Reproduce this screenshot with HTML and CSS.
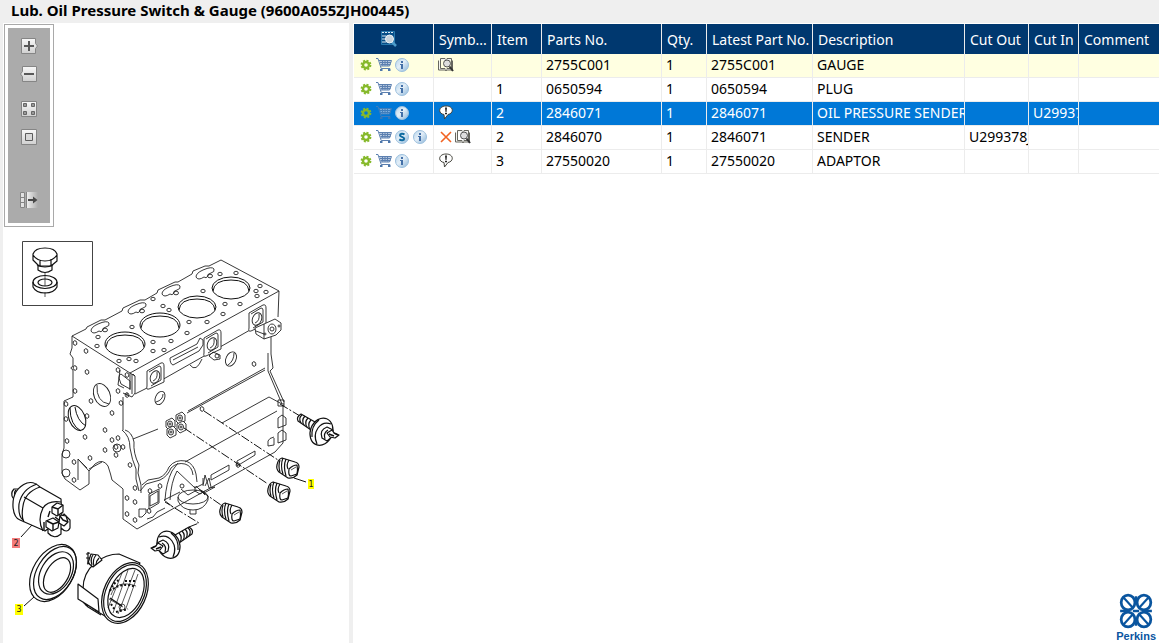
FILE: index.html
```html
<!DOCTYPE html>
<html lang="en">
<head>
  <meta charset="UTF-8">
  <meta name="viewport" content="width=device-width, initial-scale=1.0">
  <title>Lub. Oil Pressure Switch &amp; Gauge</title>
  <link rel="stylesheet" href="styles.css">
</head>
<body>
  <!-- shared icons -->
  <svg class="sprite" aria-hidden="true">
    <defs>
      <linearGradient id="metal" x1="0" y1="0" x2="0" y2="1">
        <stop offset="0" stop-color="#f8f8f8"/>
        <stop offset="1" stop-color="#d0d0d0"/>
      </linearGradient>
      <linearGradient id="fade" x1="0" y1="0" x2="1" y2="0">
        <stop offset="0" stop-color="#f4f4f4"/>
        <stop offset="1" stop-color="#ababab"/>
      </linearGradient>
      <linearGradient id="disc" x1="0" y1="0" x2="1" y2="1">
        <stop offset="0" stop-color="#b5d3ea"/>
        <stop offset="0.45" stop-color="#e4eff8"/>
        <stop offset="1" stop-color="#8ab4d8"/>
      </linearGradient>
    </defs>
    <symbol id="gear" viewBox="0 0 16 16">
      <circle cx="8" cy="8" r="4.5" fill="none" stroke="#86b92b" stroke-width="1.8" stroke-dasharray="2 1.53"/>
      <circle cx="8" cy="8" r="3" fill="none" stroke="#86b92b" stroke-width="2.4"/>
    </symbol>
    <symbol id="cart" viewBox="0 0 16 16">
      <path d="M3.5 3.5H15L13 9H5z" fill="#b6c7df"/>
      <path d="M0 1.5h2l3.2 10h9M3 3.5h12.5L13.5 9H5M4 5.5h11M4.5 7.5h10M6.5 3.5v5M9 3.5v5M11.5 3.5v5" fill="none" stroke="#5c80b0"/>
      <path d="M4 12h2.5v2H4zM12 12h2.5v2H12z" fill="#4d77ab"/>
    </symbol>
    <symbol id="info" viewBox="0 0 16 16">
      <circle cx="8" cy="8" r="6.5" fill="url(#disc)" stroke="#9cc0de"/>
      <path d="M7 4h2v2H7zM6 7h3v5H7V8H6z" fill="#4470a8"/>
    </symbol>
    <symbol id="super" viewBox="0 0 16 16">
      <circle cx="8" cy="8" r="6.5" fill="url(#disc)" stroke="#9cc0de"/>
      <path d="M10.5 5.500C9 4.300 6 4.500 6 6.200C6 8 10.200 7.700 10.200 9.800C10.200 11.500 7 11.700 5.300 10.400" fill="none" stroke="#0d6aa0" stroke-width="2"/>
    </symbol>
    <symbol id="book" viewBox="0 0 16 16">
      <path d="M.5 3.500V13H7l1 .8L9 13h5.500V3.500M2.500 11.500V1.500H7l1 1 1-1h4.500v10H9l-1 1-1-1z" fill="#f3f3f0" stroke="#66665f"/>
      <circle cx="9" cy="6.500" r="3.500" fill="#dedede" stroke="#555"/>
      <path d="M11.500 9.500 15 14" stroke="#333" stroke-width="2"/>
    </symbol>
    <symbol id="note" viewBox="0 0 16 16">
      <path d="M6 9.500C-.5 8.500.5 1 8 1c8 0 8 7.500 2 8.500L6.500 14z" fill="#fff" stroke="#44443c"/>
      <path d="M7 2.500h2L8.500 7h-1zM7 7.700h2v1.500H7z" fill="#222"/>
    </symbol>
    <symbol id="cross" viewBox="0 0 16 16">
      <path d="m3 3 10 10M13 3 3 13" fill="none" stroke="#f26322" stroke-width="1.6"/>
    </symbol>
  </svg>

  <header class="title-bar">
    <h1>Lub. Oil Pressure Switch &amp; Gauge (9600A055ZJH00445)</h1>
  </header>

  <main class="split">
    <section class="drawing-pane">
      <div class="toolbar">
        <button type="button" aria-label="Zoom in">
          <svg viewBox="0 0 18 16"><path d="M1.5.5h14v5l2 2.500-2 2.500v5h-14z" fill="url(#metal)" stroke="#858585"/><path d="M4 8h10M9 3v10" stroke="#585858" stroke-width="2"/></svg>
        </button>
        <button type="button" aria-label="Zoom out">
          <svg viewBox="0 0 18 16"><path d="M16.5.5h-14v5l-2 2.500 2 2.500v5h14z" fill="url(#metal)" stroke="#858585"/><path d="M4 8h10" stroke="#585858" stroke-width="2"/></svg>
        </button>
        <button type="button" class="group" aria-label="Fit all">
          <svg viewBox="0 0 18 16"><path d="M1.500.5h15v15h-15z" fill="url(#metal)" stroke="#858585"/><path d="M3.500 2.500h3v3h-3zM11.500 2.500h3v3h-3zM3.500 10.500h3v3h-3zM11.500 10.500h3v3h-3z" fill="#999" stroke="#666"/></svg>
        </button>
        <button type="button" aria-label="Actual size">
          <svg viewBox="0 0 18 16"><path d="M1.500.5h15v15h-15z" fill="url(#metal)" stroke="#858585"/><path d="M5.500 4.500h7v7h-7z" fill="#d8d8d8" stroke="#5c5c5c"/></svg>
        </button>
        <button type="button" class="detach" aria-label="Move panel">
          <svg viewBox="0 0 18 16"><path d="M6 0h12v16H6z" fill="url(#fade)"/><path d="M.5.5h4v15h-4zM.5 5.500h4M.5 10.500h4M6.500 0v16" fill="#e2e2e2" stroke="#858585"/><path d="M8 8h7" stroke="#484848" stroke-width="2"/><path d="m13 4.500 4.500 3.500-4.500 3.500z" fill="#484848"/></svg>
        </button>
      </div>

      <svg class="drawing" viewBox="3 227 346 416" role="img" aria-label="Cylinder block with oil pressure senders, plugs and gauge">
        <defs>
          <ellipse id="hole" rx="2.2" ry="1.7"/>
          <ellipse id="port" rx="1.8" ry="2.3" transform="rotate(-15)"/>
          <g id="plug">
            <path d="M-11-3Q-10-9-6-10L7-6Q11-5 11-1L9 7Q5 11 0 10L-9 4Q-12 1-11-3z" fill="#fff"/>
            <path d="M-8-8Q-10-2-8 4M-5-10Q-8-3-5 6M-2-9Q-5-2-2 8M1-8Q-2-3 0 1" />
            <path d="M1 1Q5-3 9-3 10 2 9 6L3 8Q0 8 1 1z"/>
            <path d="M3 2 8-1" stroke-width="0.7"/>
          </g>
          <g id="sender">
            <path d="M-24-12Q-26-16-21-19L-7-11-11-3z" fill="#fff"/>
            <path d="M-20-18Q-24-15-21-10M-17-17Q-21-13-18-8M-14-15Q-18-11-15-6M-11-13Q-15-9-12-4"/>
            <ellipse cx="-1" cy="-1" rx="11" ry="14" transform="rotate(22)" fill="#fff"/>
            <path d="M-10 4Q-11-7-3-13M-5 11Q-9 2-4-5 1-12 9-9"/>
            <path d="M0 5Q-3-3 5-6l6 3v6L5 8z" fill="#fff"/>
            <path d="M3 6Q1 0 6-3M5 0l5-3 2 3 5 2-4 3-5-1z" fill="#fff"/>
            <path d="M7 1l5 2M12 0l4 2" class="heavy"/>
          </g>
          <g id="pad">
            <path d="M-8-6 6-14Q9-15 9-11V5L-6 12Q-9 13-8 9zM-6-5 4-11Q6-11 6-9V3L-4 9" fill="#fff"/>
            <ellipse rx="4.5" ry="6.5" transform="rotate(22)"/>
            <path d="M-2 4Q3 2 2-5"/>
          </g>
          <g id="kidney">
            <path d="M-9 3Q-9-1-2-4 7-8 9-5 10-2 6-1 2 0 3 2 1 5-1 3-7 7-9 3z"/>
            <ellipse cx="5" cy="2" rx="2.5" ry="1.8"/>
          </g>
          <g id="boss">
            <path d="M-4-3 2-6 5-3V3L-1 6-4 3z" fill="#fff"/>
            <ellipse rx="2.5" ry="3"/>
            <circle r="1"/>
          </g>
        </defs>

        <!-- plug and washer inset -->
        <path class="frame" d="M22.500 241.500h70v64h-70z"/>
        <g class="part">
          <path d="M33 254Q35 248 45 248T57 254V261L51 266H39L33 260zM33 255Q37 261 45 261T57 255M40 260V266M51 259V266"/>
          <path d="M38 266V270Q45 275 52 270V266M37 265Q45 269 53 265"/>
          <ellipse cx="45" cy="282" rx="12" ry="6.5"/>
          <ellipse cx="45" cy="282.5" rx="7" ry="3.5"/>
          <path d="M33 282V287Q36 293 45 293T57 287V282"/>
        </g>
        <path class="fine" d="M45 273V286M45 292V297"/>

        <!-- cylinder block -->
        <g class="block">
          <path d="M72 336 86 329 87 327 101 320 105 320 122 311 123 308 140 300 145 300 157 293 158 290 175 282 178 282 192 274 193 271 205 266 209 266 221 260 279 291 130 373z"/>
          <path d="M72 336V348L70 354 73 358V366Q69 368 73 370V397L64 401V448L62 455V473L65 479 80 490 89 484V471L78 459V480M78 459 87 468"/>
          <path d="M130 373 135 376V393L132 397 123 393M135 376 133 374M127 396V393M123 397V430M120 370 118 385 124 388M135 394 153 385M160 381 250 330M279 291 278 317"/>
          <path d="M121 374Q119 374 119 378L121 384 130 389V381zM130 373V390M132 374V394"/>
          <path d="M89 471 95 464Q103 458 108 466 111 475 112 480L122 488 123 489V519L137 529 160 516 212 487 275 452 283 443V403"/>
          <path d="M89 469 102 462M125 430Q132 432 134 442 133 453 139 465L138 473 141 485V493M122 430Q130 436 130 448 132 460 136 469L136 479 139 491"/>
          <path d="M133 439 158 429M187 413 265 370M188 411 265 368M271 337V354L273 368 270 371 284 402M268 353 268 371 282 404"/>
          <path d="M222 423 269 397 282 404M185 462 277 411M278 353"/>
          <path d="M278 400h6v6h-6zM278 418l4-3 4 3v7l-8 3zM278 433l4-3 4 3v7l-8 3zM268 446v-5q1-3 6-4M268 446l6-1v-7"/>

          <g class="bores">
            <ellipse cx="125" cy="344" rx="20" ry="12"/><path d="M106 347Q107 335 125 335T144 347"/>
            <ellipse cx="160" cy="325" rx="20" ry="12"/><path d="M141 328Q142 316 160 316T179 328"/>
            <ellipse cx="197" cy="307" rx="19" ry="11"/><path d="M179 310Q180 299 197 299T215 310"/>
            <ellipse cx="231" cy="288" rx="19" ry="11"/><path d="M213 291Q214 280 231 280T249 291"/>
          </g>
          <use href="#kidney" x="100" y="328"/><use href="#kidney" x="137" y="309"/>
          <use href="#kidney" x="171" y="291"/><use href="#kidney" x="205" y="274"/>

          <use href="#hole" x="98" y="337"/><use href="#hole" x="97" y="346"/><use href="#hole" x="132" y="327"/>
          <use href="#hole" x="153" y="299"/><use href="#hole" x="163" y="306"/><use href="#hole" x="169" y="310"/>
          <use href="#hole" x="153" y="342"/><use href="#hole" x="171" y="341"/><use href="#hole" x="153" y="351"/>
          <use href="#hole" x="164" y="350"/><use href="#hole" x="119" y="361"/><use href="#hole" x="129" y="359"/>
          <use href="#hole" x="136" y="361"/><use href="#hole" x="220" y="274"/><use href="#hole" x="236" y="273"/>
          <use href="#hole" x="203" y="291"/><use href="#hole" x="260" y="286"/><use href="#hole" x="256" y="291"/>
          <use href="#hole" x="266" y="292"/><use href="#hole" x="257" y="296"/><use href="#hole" x="225" y="304"/>
          <use href="#hole" x="240" y="304"/><use href="#hole" x="223" y="314"/><use href="#hole" x="189" y="322"/>
          <use href="#hole" x="207" y="322"/><use href="#hole" x="187" y="333"/>

          <use href="#port" x="75" y="343"/><use href="#port" x="86" y="351"/><use href="#port" x="75" y="368"/>
          <use href="#port" x="87" y="372"/><use href="#port" x="75" y="391"/><use href="#port" x="91" y="401"/>
          <use href="#port" x="87" y="416"/><use href="#port" x="112" y="413"/><use href="#port" x="118" y="370"/>
          <use href="#port" x="118" y="391"/><use href="#port" x="127" y="375"/><use href="#port" x="127" y="395"/>
          <use href="#port" x="121" y="403"/><use href="#port" x="85" y="437"/><use href="#port" x="105" y="450"/>
          <use href="#port" x="112" y="440"/><use href="#port" x="118" y="438"/><use href="#port" x="123" y="447"/>
          <use href="#port" x="116" y="455"/><use href="#port" x="116" y="447"/><use href="#port" x="90" y="458"/>
          <use href="#port" x="67" y="441"/><use href="#port" x="74" y="462"/><use href="#port" x="74" y="480"/>
          <use href="#port" x="66" y="404"/><use href="#port" x="66" y="419"/><use href="#port" x="105" y="430"/>
          <use href="#port" x="130" y="465"/><use href="#port" x="127" y="498"/><use href="#port" x="135" y="502"/>
          <use href="#port" x="127" y="514"/><use href="#port" x="135" y="520"/><use href="#port" x="254" y="364"/>
          <use href="#port" x="202" y="409"/><use href="#port" x="135" y="488"/><use href="#port" x="150" y="491"/>
          <use href="#port" x="160" y="486"/><use href="#port" x="149" y="511"/><use href="#port" x="238" y="465"/>
          <circle cx="66" cy="454" r="4"/><circle cx="66" cy="473" r="4"/><circle cx="117" cy="448" r="4"/>

          <ellipse cx="102" cy="395" rx="8" ry="12" transform="rotate(-22 102 395)"/>
          <path d="M97 385Q96 402 109 404"/>
          <g class="bores">
            <ellipse cx="77" cy="418" rx="8" ry="13" transform="rotate(-22 77 418)"/>
            <path d="M75 407Q77 421 86 426M70 408Q70 425 81 431"/>
          </g>
          <ellipse cx="160" cy="398" rx="4.5" ry="7" transform="rotate(25 160 398)"/><path d="M156 402Q163 400 163 394"/>
          <ellipse cx="231" cy="359" rx="5" ry="7.5" transform="rotate(25 231 359)"/><path d="M228 365Q234 361 234 353"/>
          <path d="M190 365Q196 373 202 359"/>

          <use href="#pad" x="155" y="377"/><use href="#pad" x="212" y="344"/><use href="#pad" x="257" y="319"/>
          <path d="M170 358 197 344 200 338 203 340V345L199 351 173 365Q170 364 170 358zM173 360 198 347M213 352l7 3v4l-6 1-5-4z"/>
          <circle cx="217" cy="356" r="2"/>
          <path d="M255 328 264 324 275 319 281 323V330L276 335 264 339 256 334zM264 324V339M256 331 264 334" fill="#fff"/>
          <ellipse cx="272" cy="329" rx="4" ry="5"/><circle cx="272" cy="329" r="2"/><circle cx="279" cy="326" r="1"/><circle cx="265" cy="334" r="1"/>
          <use href="#boss" x="170" y="424"/><use href="#boss" x="180" y="418"/>
          <use href="#boss" x="171" y="432"/><use href="#boss" x="181" y="427"/>

          <path d="M211 480V475L229 465V470zM237 466V461L255 451V455z"/>
          <path d="M150 496 158 491V502L150 506zM149 494 159 489V503L149 509z"/>
          <path d="M142 485 148 480 159 478Q166 475 169 467 175 459 186 461 194 464 196 474L197 482M140 491 146 484 160 480Q168 476 171 468 177 462 185 464 192 466 193 475"/>
          <path d="M139 509h7v4l-4 4h-3zM147 519l6-2 4-5 8-4"/>
          <path d="M165 500Q166 483 172 471L178 463M170 500Q171 482 177 471L195 488M164 500 180 492 M164 500 173 507"/>
          <path d="M195 488l8-4v-6M203 486l2-11 4 13 6-1-11 6M205 486l4-8 2 9M195 486v5l5 3 5-3"/>
          <ellipse cx="193" cy="497" rx="15" ry="7"/>
          <path d="M178 497V501Q182 510 193 510T208 500V496M190 510V514H196V510M181 489 188 495 197 490M199 489l5 3M196 486l9 9"/>
          <circle cx="182" cy="486" r="2"/>
        </g>

        <!-- assembly lines -->
        <g class="axis">
          <path d="M280 404 300 416M204 411 278 460M184 428 268 484M201 491 221 505M189 527 199 523 165 502"/>
        </g>

        <g class="part">
          <use href="#plug" x="288" y="468"/>
          <use href="#plug" x="279" y="492"/>
          <use href="#plug" x="231" y="513"/>
          <use href="#sender" x="322" y="433"/>
          <use href="#sender" transform="translate(168 546) scale(-1 1)"/>

          <!-- oil pressure sender -->
          <path d="M20 489 14 489Q10 493 13 498L19 500" fill="#fff"/>
          <path d="M16 490Q13 493 16 498"/>
          <path d="M13 507Q12 489 27 483 34 481 40 487L61 499 62 519 45 531 20 520Q14 518 13 507z" fill="#fff"/>
          <path d="M37 484Q22 489 19 504 18 516 23 520M40 487Q25 492 23 506 21 517 24 522M24 497 43 508M43 531Q37 520 43 508 48 500 61 502"/>
          <path d="M48 529v4q6 7 13 1v-6M61 519v9q6 6 9 0v-8l-6-6z" fill="#fff"/>
          <path d="M52 507l5-4 6 2v7l-6 4-5-3zM60 515l6 1 2 6-4 4-5-3zM46 521l7-3 6 4-1 6-6 3-6-4z" fill="#fff"/>
          <path d="M52 507l6 2 5-4M58 509v6M47 521l6 3 6-2M53 524v6M60 516l3 4 5 2M44 522v8M50 511l-2 6M55 517l4 3" class="heavy"/>

          <!-- adaptor ring -->
          <ellipse cx="53" cy="573" rx="20" ry="31" transform="rotate(31 53 573)"/>
          <ellipse cx="55" cy="573" rx="18" ry="29" transform="rotate(31 55 573)"/>
          <ellipse cx="56" cy="573" rx="15" ry="23" transform="rotate(31 56 573)"/>
          <ellipse cx="57" cy="575" rx="11" ry="19" transform="rotate(31 57 575)"/>

          <!-- gauge -->
          <path d="M83 589Q83 573 95 563 106 554 119 554L140 563 105 616 86 605z" fill="#fff"/>
          <path d="M91 554 98 555 102 560 93 567 88 563z" fill="#fff"/>
          <path d="M93 555Q90 559 92 565M96 555Q92 560 94 566M99 558Q96 561 96 565M90 553l-4 1M90 558h-4M90 563l-3 1M88 552v12"/>
          <path d="M78 584 98 599 99 612 78 599zM83 602l5 5 13 8" fill="#fff"/>
          <ellipse cx="125" cy="593" rx="21" ry="32" transform="rotate(25 125 593)" fill="#fff"/>
          <ellipse cx="125" cy="593" rx="19" ry="30" transform="rotate(25 125 593)"/>
          <ellipse cx="126" cy="593" rx="16" ry="26" transform="rotate(25 126 593)"/>
        </g>
        <g class="fine">
          <path d="M122 573 108 608M128 570 113 613M135 570 118 614M138 574 125 611M109 599l14 8M111 595q5-16 25-9"/>
          <path class="dial" d="M110 591q4-9 9-11M125 581h12M113 589q10-7 23-2M116 612l12-3M111 604l4 6"/>
          <circle cx="122" cy="607" r="3"/>
          <path class="heavy" d="M110 598 122 606"/>
          <path class="leader" d="M294 478 306 482M21 537 32 525M24 606 34 597"/>
        </g>

        <g class="callout">
          <rect class="hit" x="308" y="479" width="6" height="10"/><text x="311" y="487">1</text>
          <rect class="hit picked" x="12" y="538" width="8" height="10"/><text x="16" y="546">2</text>
          <rect class="hit" x="15" y="604" width="8" height="11"/><text x="19" y="612">3</text>
        </g>
      </svg>
    </section>

    <section class="parts-pane">
      <table class="parts">
        <colgroup>
          <col class="c-actions"><col class="c-symbols"><col class="c-item"><col class="c-part"><col class="c-qty">
          <col class="c-latest"><col class="c-desc"><col class="c-out"><col class="c-in"><col>
        </colgroup>
        <thead>
          <tr>
            <th class="find">
              <button type="button" aria-label="Search parts">
                <svg viewBox="0 0 16 16"><path d="M.5.5h13v13H.5z" fill="#064e88" stroke="#2779ae"/><path d="M1 1.500h12M2 4v9M4 4v9" stroke="#d9e8f3" stroke-dasharray="2 1"/><path d="m11 11 4 4" stroke="#4c9bc9" stroke-width="2.5"/><circle cx="8.5" cy="8" r="4" fill="#c7d3dc" stroke="#eef4f8"/></svg>
              </button>
            </th>
            <th>Symb...</th><th>Item</th><th>Parts No.</th><th>Qty.</th><th>Latest Part No.</th>
            <th>Description</th><th>Cut Out</th><th>Cut In</th><th>Comment</th>
          </tr>
        </thead>
        <tbody>
          <tr class="assembly">
            <td><div class="icons"><button type="button" aria-label="Options"><svg><use href="#gear"/></svg></button><button type="button" aria-label="Add to cart"><svg><use href="#cart"/></svg></button><button type="button" aria-label="Information"><svg><use href="#info"/></svg></button></div></td>
            <td><div class="icons tight"><svg><use href="#book"/></svg></div></td>
            <td></td><td>2755C001</td><td>1</td><td>2755C001</td><td>GAUGE</td><td></td><td></td><td></td>
          </tr>
          <tr>
            <td><div class="icons"><button type="button" aria-label="Options"><svg><use href="#gear"/></svg></button><button type="button" aria-label="Add to cart"><svg><use href="#cart"/></svg></button><button type="button" aria-label="Information"><svg><use href="#info"/></svg></button></div></td>
            <td></td>
            <td>1</td><td>0650594</td><td>1</td><td>0650594</td><td>PLUG</td><td></td><td></td><td></td>
          </tr>
          <tr class="selected">
            <td><div class="icons"><button type="button" aria-label="Options"><svg><use href="#gear"/></svg></button><button type="button" aria-label="Add to cart"><svg class="dim"><use href="#cart"/></svg></button><button type="button" aria-label="Information"><svg><use href="#info"/></svg></button></div></td>
            <td><div class="icons tight"><svg><use href="#note"/></svg></div></td>
            <td>2</td><td>2846071</td><td>1</td><td>2846071</td><td>OIL PRESSURE SENDER</td><td></td><td>U299378</td><td></td>
          </tr>
          <tr>
            <td><div class="icons"><button type="button" aria-label="Options"><svg><use href="#gear"/></svg></button><button type="button" aria-label="Add to cart"><svg><use href="#cart"/></svg></button><button type="button" aria-label="Supersession"><svg><use href="#super"/></svg></button><button type="button" aria-label="Information"><svg><use href="#info"/></svg></button></div></td>
            <td><div class="icons tight"><svg><use href="#cross"/></svg><svg><use href="#book"/></svg></div></td>
            <td>2</td><td>2846070</td><td>1</td><td>2846071</td><td>SENDER</td><td>U299378J</td><td></td><td></td>
          </tr>
          <tr>
            <td><div class="icons"><button type="button" aria-label="Options"><svg><use href="#gear"/></svg></button><button type="button" aria-label="Add to cart"><svg><use href="#cart"/></svg></button><button type="button" aria-label="Information"><svg><use href="#info"/></svg></button></div></td>
            <td><div class="icons tight"><svg><use href="#note"/></svg></div></td>
            <td>3</td><td>27550020</td><td>1</td><td>27550020</td><td>ADAPTOR</td><td></td><td></td><td></td>
          </tr>
        </tbody>
      </table>

      <div class="brand">
        <svg viewBox="0 0 34 34" aria-hidden="true">
          <g fill="none" stroke="#0a559f" stroke-width="2.6">
            <ellipse cx="9.5" cy="9" rx="6.5" ry="7"/><ellipse cx="24.5" cy="9" rx="6.5" ry="7"/>
            <ellipse cx="9.5" cy="25" rx="6.5" ry="7"/><ellipse cx="24.5" cy="25" rx="6.5" ry="7"/>
            <path d="m5 4 9 10M29 4l-9 10M5 30l9-10M29 30l-9-10" stroke-width="2"/>
            <path d="M2 17h9M23 17h9M17 3v6M17 25v6M14 17h6" stroke-width="2.4"/>
          </g>
        </svg>
        <span>Perkins</span>
      </div>
    </section>
  </main>
</body>
</html>
```
FILE: styles.css
```css
* {
  box-sizing: border-box;
}
body {
  margin: 0;
  height: 100vh;
  display: flex;
  flex-direction: column;
  overflow: hidden;
  background: #efefef;
  color: #000;
  font-family: "Noto Sans", "Open Sans", sans-serif;
  font-size: 14px;
}
button {
  display: flex;
  padding: 0;
  border: none;
  background: none;
  cursor: pointer;
}
.sprite {
  position: absolute;
  width: 0;
  height: 0;
}
.title-bar {
  padding: 0 11px 2px;
}
.title-bar h1 {
  margin: 0;
  font-size: 15px;
  line-height: 21px;
  white-space: nowrap;
}
.split {
  flex: 1;
  display: flex;
  min-height: 0;
}

/* drawing */
.drawing-pane {
  flex: 0 1 353px;
  border-left: 3px solid #efefef;
  border-right: 4px solid #efefef;
  background: #fff;
}
.toolbar {
  display: flex;
  flex-direction: column;
  align-items: center;
  gap: 12px;
  width: 50px;
  margin: 1px 0 0 1px;
  padding: 13px 0 18px;
  border: 1px solid #a9a9a9;
  background: #ababab;
  box-shadow: inset 0 0 0 3px #fff;
}
.toolbar svg {
  width: 18px;
  height: 16px;
}
.toolbar .group {
  margin-top: 7px;
}
.toolbar .detach {
  margin-top: 35px;
}
.drawing {
  display: block;
  width: 100%;
  fill: none;
  stroke: #111;
}
.frame {
  stroke: #444;
}
.block {
  stroke: #222;
  stroke-width: 0.9;
}
.bores {
  stroke: #111;
  stroke-width: 1;
}
.part {
  stroke-width: 1.2;
  stroke-linejoin: round;
}
.fine {
  stroke-width: 0.7;
}
.heavy {
  stroke-width: 1.4;
}
.leader {
  stroke-width: 1;
}
.dial {
  stroke-width: 2;
  stroke-dasharray: 2 2;
}
.axis {
  stroke-dasharray: 9 2 2 2;
}
.callout {
  stroke: none;
}
.callout text {
  fill: #222;
  font-family: "DejaVu Sans", sans-serif;
  font-size: 8px;
  text-anchor: middle;
}
.hit {
  fill: #ff0;
}
.picked {
  fill: #f47c7c;
}

/* parts list */
.parts-pane {
  flex: 1;
  display: flex;
  flex-direction: column;
  min-width: 0;
  padding: 1px 0 0 1px;
  background: #fff;
}
.parts {
  width: 100%;
  table-layout: fixed;
  border-collapse: separate;
  border-spacing: 0;
}
.c-actions { width: 80px; }
.c-symbols { width: 58px; }
.c-item { width: 50px; }
.c-part { width: 120px; }
.c-qty { width: 45px; }
.c-latest { width: 106px; }
.c-desc { width: 152px; }
.c-out { width: 64px; }
.c-in { width: 50px; }
.parts th,
.parts td {
  overflow: hidden;
  white-space: nowrap;
  text-align: left;
  border-right: 1px solid #ececec;
}
.parts th {
  height: 30px;
  padding: 0 0 0 5px;
  background: #00386f;
  color: #fff;
  font-weight: normal;
}
.parts td {
  height: 24px;
  padding: 0 0 2px 4px;
  line-height: 20px;
  border-bottom: 1px solid #ececec;
}
.parts th:last-child,
.parts td:last-child {
  border-right: none;
}
.find button {
  margin-left: 22px;
}
.find svg,
.icons svg {
  display: block;
  width: 16px;
  height: 16px;
}
.icons {
  display: flex;
  gap: 2px;
}
.icons.tight {
  gap: 1px;
}
.assembly td {
  background: #ffffe1;
}
.selected td {
  background: #0078d7;
  color: #fff;
}
.dim {
  opacity: 0.7;
}
.brand {
  display: flex;
  flex-direction: column;
  align-items: center;
  align-self: flex-end;
  margin-top: auto;
  padding-right: 3px;
  color: #0a559f;
  font-family: "Liberation Sans", sans-serif;
  font-size: 11px;
  font-weight: bold;
  line-height: 14px;
}
.brand svg {
  width: 36px;
  height: 36px;
}
```
